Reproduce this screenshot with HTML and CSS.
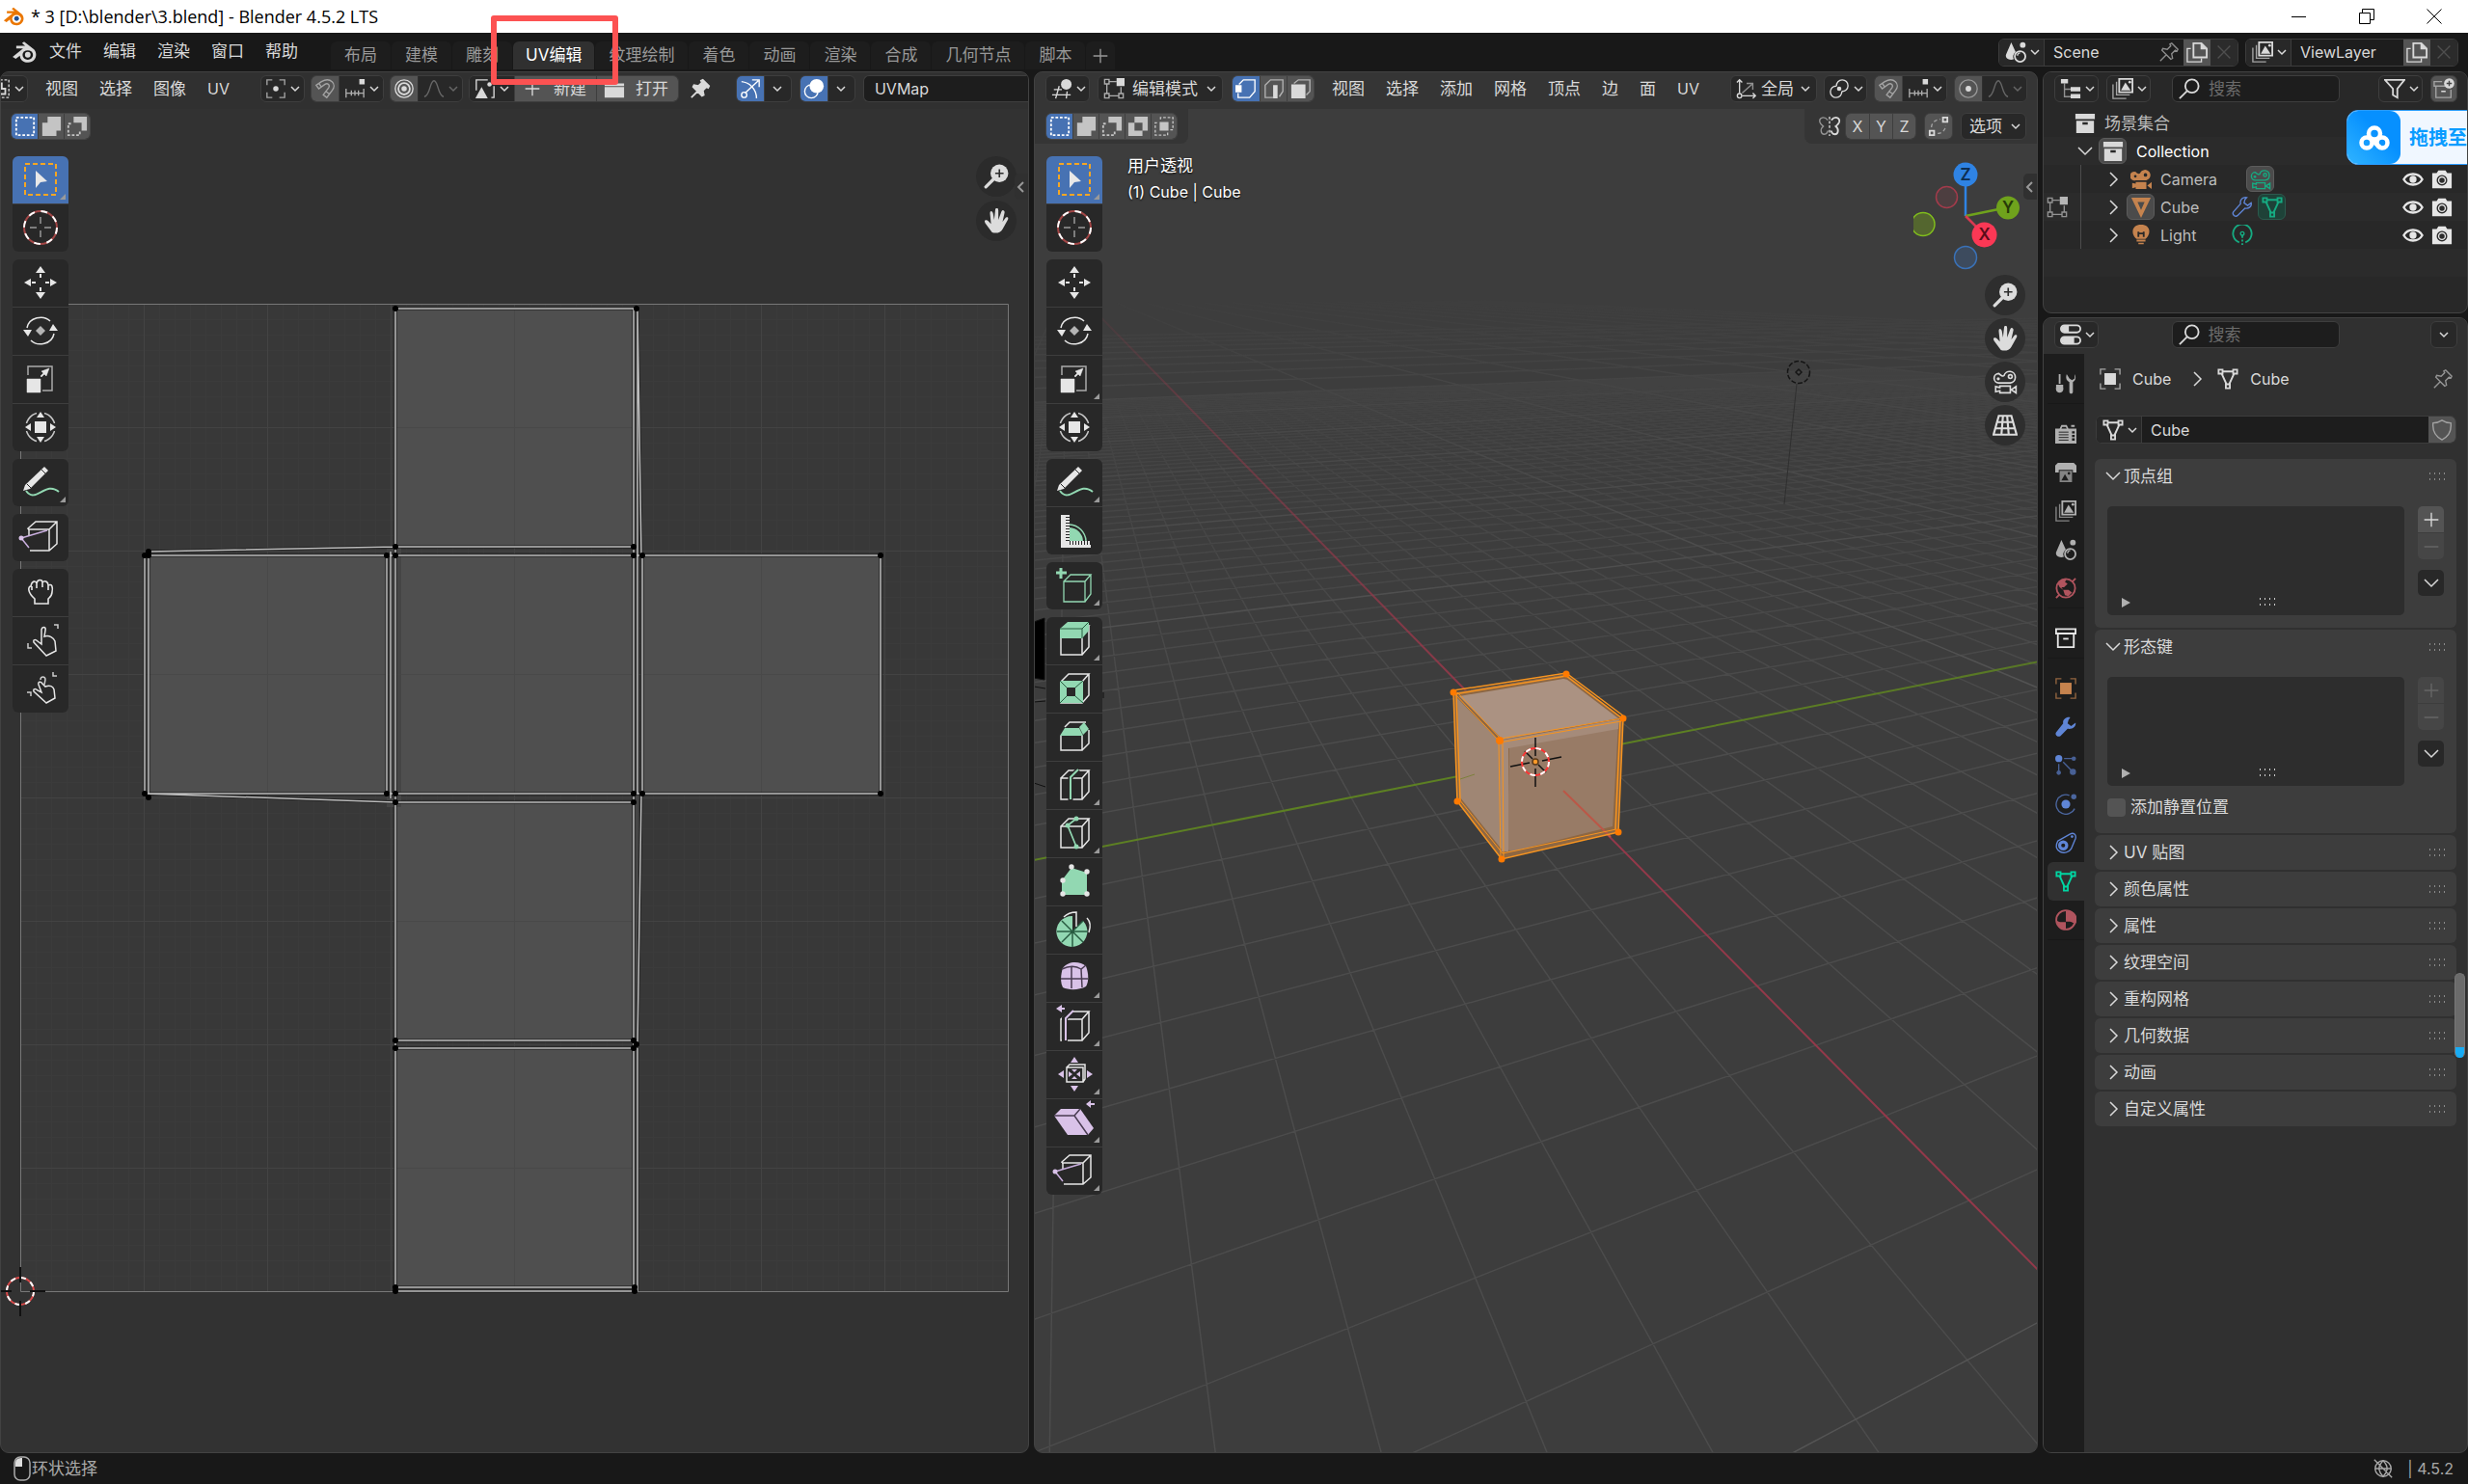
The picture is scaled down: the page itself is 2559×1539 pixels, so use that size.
FILE: index.html
```html
<!DOCTYPE html>
<html lang="zh-CN">
<head>
<meta charset="utf-8">
<title>* 3 [D:\blender\3.blend] - Blender 4.5.2 LTS</title>
<link rel="stylesheet" href="styles.css">
</head>
<body>
<svg class="sprite" aria-hidden="true">
<defs>
<symbol id="logo" viewBox="0 0 24 24"><path d="M1 16.500 11 8.500H4.500V6H13L10 3.500 12 2l9.500 7.500c4 4.500 1.500 12-5.500 12.500-5 .3-8-3-8-6.500L4 18.500Z" fill="currentColor"/><ellipse cx="15.500" cy="14.800" rx="5" ry="4.500" fill="var(--hole,#181818)"/><circle cx="15.500" cy="14.500" r="2.700" fill="var(--pupil,currentColor)"/></symbol>
<symbol id="chev-d" viewBox="0 0 12 12"><path d="M2 4l4 4 4-4" class="ln"/></symbol>
<symbol id="open" viewBox="0 0 18 18"><path d="M2 5l7 7 7-7" class="ln"/></symbol>
<symbol id="closed" viewBox="0 0 18 18"><path d="M6 2l7 7-7 7" class="ln"/></symbol>
<symbol id="back" viewBox="0 0 12 12"><path d="M8 1L3 6l5 5" class="ln2"/></symbol>
<symbol id="uvedit" viewBox="0 0 24 24"><path d="M2 2h20v20H2z" class="ln" stroke-dasharray="3 2"/><path d="M8 6h6v6h4v6H8z" class="ln2"/></symbol>
<symbol id="pivot" viewBox="0 0 24 24"><path d="M2 8V2h6M16 2h6v6M22 16v6h-6M8 22H2v-6" class="ln" opacity=".7"/><circle cx="12" cy="12" r="3" fill="currentColor"/></symbol>
<symbol id="magnet" viewBox="0 0 24 24"><path d="M2 8l6-4c10-6 18 3 12 10l-6 8-4-3 6-8c2-3-1-6-4-4L5 12zM5 6l3 4M17 18l-4-3" class="ln"/></symbol>
<symbol id="inc" viewBox="0 0 24 24"><path d="M2 12v10M22 12v10M2 17h20M8 14v6M12 14v6M16 14v6" class="ln" opacity=".75"/><path d="M17 1h6v6h-6z" fill="currentColor"/></symbol>
<symbol id="rings" viewBox="0 0 24 24"><circle cx="12" cy="12" r="10" class="ln"/><circle cx="12" cy="12" r="6.500" class="ln2"/><circle cx="12" cy="12" r="3" fill="currentColor"/></symbol>
<symbol id="prop" viewBox="0 0 24 24"><circle cx="12" cy="12" r="10" class="ln" opacity=".5"/><circle cx="12" cy="12" r="3.200" fill="currentColor"/></symbol>
<symbol id="bell" viewBox="0 0 24 24"><path d="M1 21c7-1 6-18 11-18s4 17 11 18" class="ln"/></symbol>
<symbol id="image" viewBox="0 0 24 24"><path d="M2 14V2h13M22 9v13h-3" class="ln"/><path d="M1 23l7-13 7 13z" fill="currentColor"/><circle cx="17" cy="7" r="2.500" fill="currentColor"/></symbol>
<symbol id="plus" viewBox="0 0 24 24"><path d="M12 4v16M4 12h16" class="ln"/></symbol>
<symbol id="minus" viewBox="0 0 24 24"><path d="M4 12h16" class="ln"/></symbol>
<symbol id="folder" viewBox="0 0 24 24"><path d="M1 3h10l3 3h9v3H1zM1 10h22v12H1z" fill="currentColor"/></symbol>
<symbol id="pin" viewBox="0 0 24 24"><path d="M15 2l7 7-1 2-2-1-4 4 1 5-2 1L4 10l1-2 5 1 4-4-1-2zM9 15l-7 7" fill="currentColor" stroke="currentColor" stroke-width="2"/></symbol>
<symbol id="pin-o" viewBox="0 0 24 24"><path d="M15 2l7 7-1 2-2-1-4 4 1 5-2 1L4 10l1-2 5 1 4-4-1-2zM9 15l-7 7" class="ln"/></symbol>
<symbol id="gizmo" viewBox="0 0 24 24"><path d="M6 17L21 3M14 2h8v8M2 4c9 1 17 8 17 19" class="ln"/><circle cx="5" cy="19" r="3" class="ln"/></symbol>
<symbol id="overlay" viewBox="0 0 24 24"><circle cx="15" cy="9" r="8" fill="currentColor"/><circle cx="9" cy="15" r="7.500" class="ln"/></symbol>
<symbol id="view3d" viewBox="0 0 24 24"><path d="M9 9L5 23M18 15l-1 8M3 13h9M1 19h21" class="ln"/><circle cx="17" cy="7" r="6" fill="currentColor"/></symbol>
<symbol id="editmode" viewBox="0 0 24 24"><path d="M7 4h8M4 7v10M7 20h10M20 17V10M1.500 1.500h5v5h-5zM1.500 17.500h5v5h-5zM17.500 17.500h5v5h-5z" class="ln" opacity=".75"/><path d="M15 0h9v9h-9z" fill="currentColor"/></symbol>
<symbol id="vert" viewBox="0 0 24 24"><path d="M4 7l5-5h13v13l-6 7H3v-5" class="ln"/><path d="M0 8h7v8H0z" fill="currentColor"/></symbol>
<symbol id="edge" viewBox="0 0 24 24"><path d="M11 22H2V8l6-6h14v13l-4 6" class="ln" opacity=".7"/><path d="M11 8h5v15h-5z" fill="currentColor"/></symbol>
<symbol id="face" viewBox="0 0 24 24"><path d="M4 6l5-4h13v13l-4 4" class="ln" opacity=".7"/><path d="M1 7h16v16H1z" fill="currentColor"/></symbol>
<symbol id="orient" viewBox="0 0 24 24"><path d="M4 17V2M1 5l3-3 3 3M7 20h15M19 17l3 3-3 3" class="ln"/><path d="M7 17L18 7M12 6h7v7" class="ln" opacity=".6"/><circle cx="4" cy="20" r="2.500" class="ln"/></symbol>
<symbol id="link" viewBox="0 0 24 24"><path d="M9 9a6.500 6.500 0 1 1 6 6M15 15a6.500 6.500 0 1 1-6-6" class="ln"/><circle cx="12" cy="12" r="2.500" fill="currentColor"/></symbol>
<symbol id="fly" viewBox="0 0 24 24"><path d="M10 5C6 0 0 2 1 7c1 3 3 4 4 5-4 3-3 9 1 9 3 0 4-3 4-4" class="ln" opacity=".6"/><path d="M14 5c4-5 10-3 9 2-1 3-3 4-4 5 4 3 3 9-1 9-3 0-4-3-4-4" class="ln2"/><path d="M12 1v22" class="ln" stroke-dasharray="3 2"/></symbol>
<symbol id="automerge" viewBox="0 0 24 24"><path d="M2 17h5v5H2zM17 2h5v5h-5z" class="ln2"/><path d="M4 13C4 8 9 4 14 4M11 20c5 0 9-4 9-9" class="ln" stroke-dasharray="4 3" opacity=".6"/></symbol>
<symbol id="scene" viewBox="0 0 24 24"><path d="M7 1l5 11c-4 3-3 7-2 8-5 2-10-1-9-5z" fill="currentColor"/><circle cx="20" cy="4" r="3.200" fill="currentColor"/><circle cx="17" cy="17" r="6" class="ln2"/><path d="M14 16c0-2 2-3 3-3" class="ln"/></symbol>
<symbol id="copy" viewBox="0 0 24 24"><path d="M5 8H1v15h16v-4" class="ln"/><path d="M8 2h9l6 6v10H8z" class="ln2"/><path d="M16 1v8h7z" fill="currentColor"/></symbol>
<symbol id="x" viewBox="0 0 24 24"><path d="M5 5l14 14M19 5L5 19" class="ln"/></symbol>
<symbol id="layers" viewBox="0 0 24 24"><path d="M8 1h15v15H8z" class="ln2"/><path d="M10 14l5-9 6 9z" fill="currentColor"/><circle cx="20" cy="4.500" r="1.500" fill="currentColor"/><path d="M5 4v15h15M1 7v16h15" class="ln" opacity=".7"/></symbol>
<symbol id="outliner" viewBox="0 0 24 24"><path d="M1 1h8v5H1zM12 10h11v5H12zM12 18h11v5H12z" fill="currentColor"/><path d="M5 6v15h7M5 12.500h7" class="ln" opacity=".6"/></symbol>
<symbol id="search" viewBox="0 0 24 24"><circle cx="15" cy="9" r="7.500" class="ln2"/><path d="M9.500 14.500L1 23" class="ln2"/></symbol>
<symbol id="filter" viewBox="0 0 24 24"><path d="M1 2h22l-8 10v10l-5-3v-7z" class="ln2"/></symbol>
<symbol id="newcoll" viewBox="0 0 24 24"><path d="M10 4H1v5h13M3 9v13h17V13" class="ln" opacity=".6"/><path d="M9 15h5" class="ln"/><circle cx="18" cy="6" r="5.800" fill="currentColor"/><path d="M18 3v6M15 6h6" stroke="#444" stroke-width="1.500"/></symbol>
<symbol id="coll" viewBox="0 0 24 24"><path d="M1 1h22v6H1zM2 9h20v14H2z" fill="currentColor"/><path d="M9 12h6" stroke="#282828" stroke-width="2.500"/></symbol>
<symbol id="coll-o" viewBox="0 0 24 24"><path d="M1 1.500h22v5H1zM3 7v15h18V7" class="ln2"/><path d="M9 12.500h6" class="ln2"/></symbol>
<symbol id="movie" viewBox="0 0 24 24"><path fill-rule="evenodd" d="M6 3.500a5 5 0 1 0 0 9.500h12a6 6 0 1 0-7-8c-1 1-3 1-5-1.500zM5.500 7a1.500 1.500 0 1 1 0 3 1.500 1.500 0 0 1 0-3zM17 5a2 2 0 1 1 0 4 2 2 0 0 1 0-4zM6 15h12v8H6v-2l-4 1v-6l4 1zM19 19l5-4v8z" fill="currentColor"/></symbol>
<symbol id="movie-o" viewBox="0 0 24 24"><path d="M6 4a4.500 4.500 0 1 0 0 9h11a5.500 5.500 0 1 0-6-7c-1 1-3 0-5-2zM7 16h10v6.500H7v-2l-4 1v-5l4 1zM18 19.500l4.500-3v6z" class="ln"/><circle cx="5.500" cy="9" r="1.500" fill="currentColor"/><circle cx="17" cy="7" r="1.800" class="ln"/></symbol>
<symbol id="tri" viewBox="0 0 24 24"><path fill-rule="evenodd" d="M1 1h22L12 24zM8 6l4 9 4-9z" fill="currentColor"/></symbol>
<symbol id="wrench-o" viewBox="0 0 24 24"><path d="M22 7l-4 3-4-3 1-4 2-2c-4-1-8 2-7 7L2 17c-2 3 2 7 5 4l8-8c4 1 8-2 7-6z" class="ln"/></symbol>
<symbol id="wrench" viewBox="0 0 24 24"><path d="M23 7l-5 4-4-3 1-4 2-3c-5-1-9 3-8 7L1 18c-2 3 2 6 5 4l8-8c6 1 10-3 9-7z" fill="currentColor"/></symbol>
<symbol id="mesh" viewBox="0 0 24 24"><path d="M1.500 1.500h4.500v4.500H1.500zM18 1.500h4.500v4.500H18zM9.750 18h4.500v4.500h-4.500zM6 3.500h12M5 6l5.500 12M19 6l-5.500 12" class="ln2"/></symbol>
<symbol id="bulb" viewBox="0 0 24 24"><path fill-rule="evenodd" d="M12 0c-12 0-11 12-5 16h10c6-4 7-16-5-16zM8 8v6h2v-3h4v3h2V8h-2v1h-4V8zM7 17h10v2H7zM9 20.500h6V22H9z" fill="currentColor"/></symbol>
<symbol id="lamp" viewBox="0 0 24 24"><path d="M8.500 20a10.500 10.500 0 1 1 7 0M12 12v3M12 17v2M12 21v2" class="ln2"/><circle cx="12" cy="10" r="2" class="ln"/></symbol>
<symbol id="eye" viewBox="0 0 24 24"><path d="M1.500 12C6 4 18 4 22.500 12 18 20 6 20 1.500 12z" fill="none" stroke="currentColor" stroke-width="2.500"/><circle cx="12" cy="12" r="4" fill="currentColor"/></symbol>
<symbol id="photo" viewBox="0 0 24 24"><path d="M1 5h5l2-3h8l2 3h5v17H1z" fill="currentColor"/><circle cx="12" cy="13" r="6" fill="#2b2b2b"/><circle cx="12" cy="13" r="4.500" fill="currentColor"/><circle cx="12" cy="13" r="3" fill="#2b2b2b"/></symbol>
<symbol id="props" viewBox="0 0 24 24"><rect x="1" y="1.500" width="22" height="8" rx="4" class="ln2"/><rect x="1" y="14.500" width="22" height="8" rx="4" class="ln2"/><path d="M5 2h5v7H5C0 8 0 3 5 2zM5 15h11v7H5c-5-1-5-6 0-7z" fill="currentColor"/></symbol>
<symbol id="objdata" viewBox="0 0 24 24"><path d="M1 7V1h6M17 1h6v6M23 17v6h-6M7 23H1v-6" class="ln" opacity=".7"/><path d="M5.500 5.500h13v13h-13z" fill="currentColor"/></symbol>
<symbol id="shield" viewBox="0 0 24 24"><path d="M12 1c3 2 6 3 10 3 1 9-2 15-10 19C4 19 1 13 2 4c4 0 7-1 10-3z" class="ln"/></symbol>
<symbol id="tools" viewBox="0 0 24 24"><path d="M4 1h2v11H4zM1 13h8v3c2 8-10 8-8 0zM13 1c-2 6 1 8 3 9v11c0 3 4 3 4 0V10c3-2 4-5 2-9v5l-3 2-3-2z" fill="currentColor"/></symbol>
<symbol id="render" viewBox="0 0 24 24"><path fill-rule="evenodd" d="M0 6h5l2-4h6l2 4h9v17H0zM8 4L7 6h6l-1-2zM18 2h4v2h-4z" fill="currentColor"/><path d="M4 10h11M4 13h11M4 16h11M4 19h11" stroke="#1d1d1d"/><path d="M19 9h3v2.500h-3zM19 13h3v2.500h-3zM19 17h3v2.500h-3z" fill="#1d1d1d"/></symbol>
<symbol id="output" viewBox="0 0 24 24"><path d="M3 1h18l3 3v8h-4V9H4v3H0V4z" fill="currentColor"/><path d="M5 10h14v13H5z" fill="currentColor" opacity=".7"/><path d="M7 21l4-7 4 7z" fill="#1d1d1d"/><circle cx="15.500" cy="13" r="1.500" fill="#1d1d1d"/></symbol>
<symbol id="world" viewBox="0 0 24 24"><circle cx="12" cy="12" r="10.500" class="ln2"/><path d="M3 7c3-5 8-5 10-5l-2 3 3 2-4 4H7l2 3-4-3zM9 14l6 0 4 3-4 4-4-1z" fill="currentColor"/><path d="M19 5l4-4M5 19l-4 4" class="ln2"/></symbol>
<symbol id="particles" viewBox="0 0 24 24"><circle cx="4" cy="4" r="4" fill="currentColor"/><g opacity=".65"><circle cx="21" cy="4" r="2.500" fill="currentColor"/><circle cx="4" cy="20" r="2.500" fill="currentColor"/><circle cx="20" cy="19" r="3.500" fill="currentColor"/><path d="M10 4h11M4 10v10M9 8l11 11" class="ln"/></g></symbol>
<symbol id="physics" viewBox="0 0 24 24"><circle cx="12" cy="12" r="5" fill="currentColor"/><g opacity=".7"><circle cx="21" cy="3.500" r="3" fill="currentColor"/><path d="M16 2a11 11 0 1 0 6 15" class="ln"/></g></symbol>
<symbol id="constraint" viewBox="0 0 24 24"><path d="M3 10L17 2c4-2 7 1 6 5l-5 12c-5 8-22 4-15-9z" class="ln"/><circle cx="9" cy="15" r="4" fill="none" stroke="currentColor" stroke-width="3.500"/><circle cx="19" cy="5" r="1.500" fill="currentColor"/></symbol>
<symbol id="material" viewBox="0 0 24 24"><circle cx="12" cy="12" r="10.800" class="ln2"/><path d="M12 1c15 0 14 14 10 16-2-3-6-3-10-3zM2 13c4 2 6 1.500 10 1.500V23C6 23 2 18 2 13z" fill="currentColor"/></symbol>
<symbol id="sel-new" viewBox="0 0 24 24"><path d="M2 2h20v20H2z" class="ln2" stroke-dasharray="3 2"/></symbol>
<symbol id="sel-ext" viewBox="0 0 24 24"><path d="M8 1h15v16h-5v6H2V8h6z" fill="currentColor"/></symbol>
<symbol id="sel-sub" viewBox="0 0 24 24"><path d="M8 1h15v16h-6V8H8z" fill="currentColor"/><path d="M5 9H2v13h13v-4" class="ln2" stroke-dasharray="3 2"/></symbol>
<symbol id="sel-diff" viewBox="0 0 24 24"><path fill-rule="evenodd" d="M8 1h15v16h-6v6H1V8h7zM8 8v9h9V8z" fill="currentColor"/></symbol>
<symbol id="sel-int" viewBox="0 0 24 24"><path d="M8 4V2h14v14h-3M4 8H2v14h14v-3" class="ln" stroke-dasharray="3 2"/><path d="M7 7h10v10H7z" fill="currentColor"/></symbol>
<symbol id="zoomin" viewBox="0 0 24 24"><circle cx="15" cy="9" r="8.500" fill="currentColor"/><path d="M15 5v8M11 9h8" stroke="#2c2c2c" stroke-width="1.500"/><path d="M9 15l-7 7" stroke="currentColor" stroke-width="3" stroke-linecap="round"/></symbol>
<symbol id="hand" viewBox="0 0 24 24"><path d="M8 23L2 15c-3-4 1-5 3-2l2 2L6 5c0-3 2-3 3 0l1 6 1-9c0-3 3-3 3 0v9l3-8c1-2 3-1 3 1l-2 9 3-4c2-1 3 0 2 2l-5 9c-2 4-7 4-10 3z" fill="currentColor"/></symbol>
<symbol id="persp" viewBox="0 0 24 24"><path d="M6 3h12l5 18H1zM4 9h16M2.500 15h19M10 3L8.500 21M14 3l1.500 18" fill="none" stroke="currentColor" stroke-width="2"/></symbol>

<symbol id="t-sub" viewBox="0 0 58 49"><path d="M55 39v6h-6z" fill="#9a9a9a"/></symbol>
<symbol id="t-select" viewBox="0 0 58 49"><rect x="13" y="8" width="32" height="32" fill="none" stroke="#f5a623" stroke-width="2" stroke-dasharray="5 3"/><path d="M24 15l12 11-7 1-5 6z" fill="#e8e8e8"/></symbol>
<symbol id="t-cursor" viewBox="0 0 58 49"><circle cx="29" cy="24" r="17" fill="none" stroke="#a24646" stroke-width="2"/><circle cx="29" cy="24" r="17" fill="none" stroke="#fff" stroke-width="2" stroke-dasharray="6.700 6.650"/><path d="M29 13v7M29 27v7M18 24h7M33 24h7" stroke="#999" stroke-width="1.500"/></symbol>
<symbol id="t-move" viewBox="0 0 58 49"><path d="M12 24l7-4v8zM46 24l-7-4v8zM29 7l-5 7h10zM29 41l-5-7h10zM20 23h4v2h-4zM34 23h4v2h-4zM28 15h2v4h-2zM28 29h2v4h-2z" fill="#e6e6e6"/></symbol>
<symbol id="t-rotate" viewBox="0 0 58 49"><path d="M15 21c2-11 17-14 24-7M43 27c-2 11-17 14-24 7" fill="none" stroke="#e6e6e6" stroke-width="1.500"/><path d="M11 23h9l-4 7zM47 24h-9l4-7z" fill="#e6e6e6"/><path d="M29 19l5 5-5 5-5-5z" fill="#b4b4b4"/></symbol>
<symbol id="t-scale" viewBox="0 0 58 49"><path d="M16 20V11h25v25H31" fill="none" stroke="#aaa" stroke-width="1.500"/><path d="M15 24h14v14H15zM38 13l-8 3 5 5zM29 21l1 1 4-4-1-1z" fill="#e6e6e6" stroke="#e6e6e6" stroke-width=".5"/></symbol>
<symbol id="t-transform" viewBox="0 0 58 49"><circle cx="29" cy="24" r="15" fill="none" stroke="#c8c8c8" stroke-width="1.500"/><path d="M11 20h8v8h-8zM39 20h8v8h-8zM25 7h8v8h-8zM25 33h8v8h-8z" fill="#282828"/><path d="M13 24l6-4v8zM45 24l-6-4v8zM29 8l-4 6h8zM29 40l-4-6h8zM23 18h12v12H23z" fill="#e6e6e6"/></symbol>
<symbol id="t-annotate" viewBox="0 0 58 49"><path d="M14 33C24 47 34 22 48 34" fill="none" stroke="#92d8b2" stroke-width="2"/><path d="M11 33l2-6L33 8l4 4-19 19z" fill="#e6e6e6"/><path d="M30 11l4 4M15 26l4 4" stroke="#282828"/></symbol>
<symbol id="t-measure" viewBox="0 0 58 49"><path d="M15 8h9v27h22v7H15z" fill="#e6e6e6"/><path d="M24 21a15 15 0 0 1 14 14H24z" fill="#92d8b2"/><path d="M24 18a18 18 0 0 1 17 17" fill="none" stroke="#92d8b2" stroke-width="1.500"/><path d="M22 10v25" stroke="#282828" stroke-width="4" stroke-dasharray="1 2"/><path d="M24 37h22" stroke="#282828" stroke-width="4" stroke-dasharray="1 2"/></symbol>
<symbol id="cube" viewBox="0 0 58 49"><path d="M15 17h22v22H15zM15 17l8-8h21l-7 8M44 9v22l-7 8" fill="none" stroke="currentColor" stroke-width="1.500"/></symbol>
<symbol id="t-add" viewBox="0 0 58 49"><path d="M18 20h22v21H18zM18 20l7-7h21l-6 7M46 13v20l-6 8" fill="none" stroke="#92d8b2" stroke-width="1.300"/><path d="M15 6v11M10 11h11" stroke="#92d8b2" stroke-width="3"/></symbol>
<symbol id="t-extrude" viewBox="0 0 58 49"><use href="#cube"/><path d="M14 12l8-7h22v9l-7 8H14z" fill="#92d8b2"/><path d="M14 12h23l7-7M37 12v10" fill="none" stroke="#285c41"/></symbol>
<symbol id="t-inset" viewBox="0 0 58 49"><use href="#cube"/><path fill-rule="evenodd" d="M14 16h24v23H14zM21 23v9h9v-9z" fill="#92d8b2"/><path d="M14 16l7 7M38 16l-8 7M14 39l7-7M38 39l-8-7" stroke="#285c41"/></symbol>
<symbol id="t-bevel" viewBox="0 0 58 49"><path d="M15 23v15h22V23M44 17v14l-7 7M19 14l5-5h17" fill="none" stroke="#e6e6e6" stroke-width="1.500"/><path d="M14 23l5-8h15l4 8zM34 14l5-5 5 7-6 6z" fill="#92d8b2"/></symbol>
<symbol id="t-loop" viewBox="0 0 58 49"><use href="#cube"/><path d="M25 40V16l8-8" fill="none" stroke="#282828" stroke-width="5"/><path d="M25 39V16l8-8" fill="none" stroke="#92d8b2" stroke-width="2"/></symbol>
<symbol id="t-knife" viewBox="0 0 58 49"><use href="#cube"/><path d="M31 9l-9 7 9 22" fill="none" stroke="#92d8b2" stroke-width="1.700"/><g fill="#92d8b2"><circle cx="31" cy="9" r="2.500"/><circle cx="22" cy="16" r="2.500"/><circle cx="31" cy="38" r="2.500"/></g></symbol>
<symbol id="t-poly" viewBox="0 0 58 49"><path d="M16 23l10-13 16 5v23H16z" fill="#92d8b2"/><g fill="#e6e6e6"><circle cx="26" cy="9" r="2.700"/><circle cx="42" cy="14" r="2.700"/><circle cx="17" cy="23" r="2.700"/><circle cx="17" cy="37" r="2.700"/><circle cx="42" cy="37" r="2.700"/></g></symbol>
<symbol id="t-spin" viewBox="0 0 58 49"><path d="M27 26V10a16 16 0 1 0 11 5z" fill="#92d8b2"/><path d="M27 26v16M11 26h32M16 15l22 22M38 15L16 37" stroke="#285c41" stroke-width="1.500"/><path d="M18 11c4-4 9-5 13-5v15M42 12c4 4 4 9 2 15" fill="none" stroke="#e6e6e6" stroke-width="1.500"/></symbol>
<symbol id="t-smooth" viewBox="0 0 58 49"><path d="M17 14c6-8 18-7 24-2 3 8 3 16 0 21-7 4-18 4-24 1-3-6-2-14 0-20z" fill="#d9c2e8"/><path d="M15 25h28M26 13v22M16 15c8-4 14-4 20 0l5-4M36 15l1 19" fill="none" stroke="#4a3d52" stroke-width="1.500"/></symbol>
<symbol id="t-slide" viewBox="0 0 58 49"><use href="#cube"/><path d="M19 40V16l7-8" fill="none" stroke="#282828" stroke-width="6"/><path d="M20 39V16l8-8" fill="none" stroke="#d9c2e8" stroke-width="2"/><path d="M10 6l6-4v3h3v2h-3v3z" fill="#d9c2e8"/></symbol>
<symbol id="t-shrink" viewBox="0 0 58 49"><path d="M21 17h17v15H21zM21 17l3-3h16v15l-2 3" fill="none" stroke="#e6e6e6" stroke-width="1.500"/><path d="M29 6l4 6h-8zM29 42l4-6h-8zM12 24l6-4v8zM48 24l-6-4v8zM29 22l3-3h-6zM29 26l3 3h-6zM27 24l-4-3v6zM31 24l4-3v6z" fill="#d9c2e8"/></symbol>
<symbol id="t-shear" viewBox="0 0 58 49"><path d="M8 17l7-7h20l14 20-6 7H22z" fill="#d9c2e8"/><path d="M8 17h21l14 20M29 17l6-7" fill="none" stroke="#4a3d52" stroke-width="1.500"/><path d="M41 5l5-4v3h4v2h-4v3z" fill="#d9c2e8"/></symbol>
<symbol id="t-rip" viewBox="0 0 58 49"><path d="M16 16V15l8-7h22v23l-8 7H18M16 16h22v22M38 16l8-8M17 16v6" fill="none" stroke="#e6e6e6" stroke-width="1.500"/><path d="M9 25L36 17M9 25l8 10" fill="none" stroke="#c9aede" stroke-width="1.500"/><circle cx="9" cy="25" r="2.500" fill="#d9c2e8"/></symbol>
<symbol id="t-grab" viewBox="0 0 58 49"><path d="M23 36v-5c-8-7-7-13-4-13 1-6 5-6 6-3 1-5 6-4 6-1 3-3 6 0 6 3 4-2 5 2 4 7 0 4-3 6-4 7v5zM20 18v4M25 15v5M31 14v5M37 17v5" fill="none" stroke="#e6e6e6" stroke-width="1.600"/></symbol>
<symbol id="t-relax" viewBox="0 0 58 49"><path d="M33 40L20 26c-1-3 2-3 4-1l4 3V13c1-4 5-3 4 1l-1 6c5-2 10 2 11 5l1 10z" transform="translate(2 0)" fill="none" stroke="#e6e6e6" stroke-width="1.500"/><path d="M31 8h5v4M14 26v5h4" transform="translate(12 0) translate(-2 0)" fill="none" stroke="#ccc" stroke-width="0"/><path d="M43 8h4v4M16 27v5h4" fill="none" stroke="#ccc" stroke-width="1.500"/></symbol>
<symbol id="t-pinch" viewBox="0 0 58 49"><path d="M35 39L22 27c-1-3 2-3 4-1l4 2-3-8c-1-3 2-4 4-1l3 3c5-2 8 0 9 3l1 9z" fill="none" stroke="#e6e6e6" stroke-width="1.500"/><path d="M29 15c0-4 5-4 5 0l-1 5M42 7v4h4M15 28h4v4" fill="none" stroke="#ccc" stroke-width="1.500"/></symbol>

<pattern id="uv-minor" x="21" y="315" width="16" height="16" patternUnits="userSpaceOnUse"><path d="M.5 0v16M0 .5h16" stroke="#3b3b3b"/></pattern>
<pattern id="uv-major" x="21" y="315" width="128" height="128" patternUnits="userSpaceOnUse"><path d="M.5 0v128M0 .5h128" stroke="#464646"/></pattern>
<linearGradient id="fade" gradientUnits="userSpaceOnUse" x1="0" y1="295" x2="0" y2="760"><stop offset="0" stop-color="#000"/><stop offset=".25" stop-color="#666"/><stop offset="1" stop-color="#fff"/></linearGradient>
<mask id="fog" maskUnits="userSpaceOnUse" x="1000" y="60" width="1200" height="1500"><path d="M1000 60h1200v1500H1000z" fill="url(#fade)"/></mask>
</defs>
</svg>

<div class="titlebar">
  <svg class="ico orange"><use href="#logo"/></svg>
  <h1>* 3 [D:\blender\3.blend] - Blender 4.5.2 LTS</h1>
  <div class="winbtns">
    <button aria-label="最小化"><svg viewBox="0 0 16 16"><path d="M0 8.500h15" stroke="#000" fill="none"/></svg></button>
    <button aria-label="还原"><svg viewBox="0 0 16 16"><path d="M.5 4.500h11v11H.5zM3.500 4V.5h12v11H12" stroke="#000" fill="none"/></svg></button>
    <button aria-label="关闭"><svg viewBox="0 0 16 16"><path d="M.5.5l15 15M15.500.5l-15 15" stroke="#000" fill="none"/></svg></button>
  </div>
</div>

<header class="topbar">
  <svg class="ico logo"><use href="#logo"/></svg>
  <nav class="menus"><button>文件</button><button>编辑</button><button>渲染</button><button>窗口</button><button>帮助</button></nav>
  <nav class="tabs"><button>布局</button><button>建模</button><button>雕刻</button><button class="on">UV编辑</button><button>纹理绘制</button><button>着色</button><button>动画</button><button>渲染</button><button>合成</button><button>几何节点</button><button>脚本</button><button aria-label="添加工作区"><svg class="ico"><use href="#plus"/></svg></button></nav>
  <div class="idgroup scene">
    <button class="dd" aria-label="场景"><svg class="ico"><use href="#scene"/></svg><svg class="cv"><use href="#chev-d"/></svg></button>
    <input class="field en" aria-label="场景名称" value="Scene"><svg class="ico dim inpin"><use href="#pin-o"/></svg>
    <button class="sq lit" aria-label="新建场景"><svg class="ico"><use href="#copy"/></svg></button>
    <button class="sq off" aria-label="删除场景" disabled><svg class="ico"><use href="#x"/></svg></button>
  </div>
  <div class="idgroup layer">
    <button class="dd" aria-label="视图层"><svg class="ico"><use href="#layers"/></svg><svg class="cv"><use href="#chev-d"/></svg></button>
    <input class="field en" aria-label="视图层名称" value="ViewLayer">
    <button class="sq lit" aria-label="新建视图层"><svg class="ico"><use href="#copy"/></svg></button>
    <button class="sq off" aria-label="删除视图层" disabled><svg class="ico"><use href="#x"/></svg></button>
  </div>
</header>

<main class="workspace">
<section class="editor uv">
  <svg class="canvas" viewBox="1 75 1065 1431" preserveAspectRatio="xMidYMid slice">
    <path d="M21 315h1024v1024H21z" fill="#383838"/>
    <path d="M21 315h1024v1024H21z" fill="url(#uv-minor)"/>
    <path d="M410 320h250v247H410zM151 576h250v247H151zM410 576h247v247H410zM666 576h247v247H666zM410 832h247v247H410zM410 1087h247v250H410z" fill="#4f4f4f"/>
    <path d="M401 567h15v270h-15zM655 320h7v1018h-7z" fill="#454545"/>
    <path d="M21 315h1024v1024H21z" fill="url(#uv-major)" opacity=".7"/>
    <path d="M21.500 315.500h1024v1024h-1024z" fill="none" stroke="#777"/>
    <g id="uvmesh"></g>
    <circle cx="21" cy="1339" r="14" fill="none" stroke="#d84a4a" stroke-width="2"/>
    <circle cx="21" cy="1339" r="14" fill="none" stroke="#fff" stroke-width="2" stroke-dasharray="5.500 5.500"/>
    <path d="M21 1314v16M21 1349v16M1 1339h11M31 1339h16" stroke="#111" stroke-width="2"/>
  </svg>
  <div class="bar">
    <button class="dd box cut" aria-label="编辑器类型"><svg class="ico"><use href="#uvedit"/></svg><svg class="cv"><use href="#chev-d"/></svg></button>
    <nav class="menus"><button>视图</button><button>选择</button><button>图像</button><button class="en">UV</button></nav>
    <div class="uvtools">
      <button class="dd box" aria-label="轴心点"><svg class="ico"><use href="#pivot"/></svg><svg class="cv"><use href="#chev-d"/></svg></button>
      <div class="join"><button class="sq lit" aria-label="吸附"><svg class="ico dim"><use href="#magnet"/></svg></button><button class="dd" aria-label="吸附至"><svg class="ico"><use href="#inc"/></svg><svg class="cv"><use href="#chev-d"/></svg></button></div>
      <div class="join"><button class="sq lit" aria-label="衰减编辑"><svg class="ico"><use href="#rings"/></svg></button><button class="dd faint" aria-label="衰减"><svg class="ico"><use href="#bell"/></svg><svg class="cv"><use href="#chev-d"/></svg></button></div>
      <div class="join"><button class="dd" aria-label="图像"><svg class="ico"><use href="#image"/></svg><svg class="cv"><use href="#chev-d"/></svg></button><button class="lit wide"><svg class="ico"><use href="#plus"/></svg>新建</button><button class="lit wide"><svg class="ico"><use href="#folder"/></svg>打开</button></div>
    </div>
    <button class="sq pinbtn" aria-label="固定"><svg class="ico"><use href="#pin"/></svg></button>
    <div class="uvshow">
      <div class="join"><button class="sq blue" aria-label="Gizmo"><svg class="ico"><use href="#gizmo"/></svg></button><button class="sq" aria-label="Gizmo 选项"><svg class="cv"><use href="#chev-d"/></svg></button></div>
      <div class="join"><button class="sq blue" aria-label="叠加层"><svg class="ico"><use href="#overlay"/></svg></button><button class="sq" aria-label="叠加层选项"><svg class="cv"><use href="#chev-d"/></svg></button></div>
      <input class="field en uvmap" aria-label="UV 贴图" value="UVMap">
    </div>
  </div>
  <div class="bar2">
    <div class="join soft"><button class="sq blue" aria-label="新建选择"><svg class="ico"><use href="#sel-new"/></svg></button><button class="sq lit pick3" aria-label="扩展选择"><svg class="ico"><use href="#sel-ext"/></svg></button><button class="sq lit pick3" aria-label="减去选择"><svg class="ico"><use href="#sel-sub"/></svg></button></div>
  </div>
  <div class="stage">
    <div class="toolbar">
      <div><button class="on" aria-label="框选"><svg><use href="#t-select"/><use href="#t-sub"/></svg></button><button aria-label="游标"><svg><use href="#t-cursor"/></svg></button></div>
      <div><button aria-label="移动"><svg><use href="#t-move"/></svg></button><button aria-label="旋转"><svg><use href="#t-rotate"/></svg></button><button aria-label="缩放"><svg><use href="#t-scale"/></svg></button><button aria-label="变换"><svg><use href="#t-transform"/></svg></button></div>
      <div><button aria-label="标注"><svg><use href="#t-annotate"/><use href="#t-sub"/></svg></button></div>
      <div><button aria-label="断离区域"><svg><use href="#t-rip"/></svg></button></div>
      <div><button aria-label="抓起"><svg><use href="#t-grab"/></svg></button><button aria-label="松弛"><svg><use href="#t-relax"/></svg></button><button aria-label="夹捏"><svg><use href="#t-pinch"/></svg></button></div>
    </div>
    <div class="navcol flat"><button aria-label="缩放视图"><svg class="ico"><use href="#zoomin"/></svg></button><button aria-label="移动视图"><svg class="ico"><use href="#hand"/></svg></button></div>
  </div>
  <button class="sidetab" aria-label="侧栏"><svg class="cv"><use href="#back"/></svg></button>
</section>

<section class="editor view">
  <svg class="canvas" viewBox="1073 75 1039 1431" preserveAspectRatio="xMidYMid slice">
    <g id="grid" mask="url(#fog)"></g>
    <g mask="url(#fog)" fill="none" stroke-width="2"><path d="M1117 304L1592 790 2120 1324" stroke="#93394a"/><path d="M1072 892L2120 685" stroke="#5d8023"/></g>
    <path d="M1072 645l11-4v64l-11-2zM1072 712l12 2M1072 728l12-1M1072 812l12 4M1144 718v6" fill="#000" stroke="#111"/>
    <g fill="none" stroke="#151515" stroke-width="1.500"><circle cx="1865" cy="386" r="11.500" stroke-dasharray="5 2"/><path d="M1865 383l3 3-3 3-3-3z"/></g><path d="M1863 398l-13 125" stroke="#303030"/>
    <g>
      <path d="M1507 718L1624 699 1683 745 1678 863 1557 891 1511 831z" fill="#8d6743"/>
      <path d="M1513 722l108-18q4 0 7 3l50 38-120 22z" fill="#ab9282"/>
      <path d="M1511 724l44 45 3 113-44-55z" fill="#9f8674"/>
      <path d="M1565 772l113-22-6 107-104 26q-5 0-5-6z" fill="#987b66"/>
      <path d="M1555 768l124-22-1 10-114 20v107h-7z" fill="#a58b7a"/>
      <path d="M1621 820l49 48" stroke="#bb5747" stroke-width="2"/>
      <path d="M1511 809l18-6" stroke="#7d803c"/>
      <g fill="none" stroke="#f79420"><path stroke-width="1.500" d="M1507 720L1624 701 1682 745M1507 716L1624 698 1684 743M1507 718l4 113M1510 720l4 110M1511 831l46 60 121-28M1678 863l5-118M1675 860l5-113"/><path d="M1513 829l45 56 118-25M1507 718l47 50M1511 718l45 48M1555 770l126-22M1556 766l126-21M1554 770l2 120M1558 770l1 120"/></g>
      <g fill="#ff7a00"><circle cx="1507" cy="718" r="3.500"/><circle cx="1624" cy="699" r="3.500"/><circle cx="1683" cy="745" r="3.500"/><circle cx="1555" cy="768" r="4"/><circle cx="1511" cy="831" r="3.500"/><circle cx="1557" cy="891" r="3.500"/><circle cx="1678" cy="863" r="3.500"/></g>
    </g>
    <g fill="none" stroke-width="1.500"><path d="M1592 765v19M1592 797v19M1566 795l20-4M1599 789l20-4M1581 779l8 8M1595 793l8 8" stroke="#111"/><circle cx="1592" cy="790" r="14" stroke="#ff3333" stroke-width="2"/><circle cx="1592" cy="790" r="14" stroke="#fff" stroke-width="2" stroke-dasharray="5.500 5.500"/><circle cx="1592" cy="790" r="3" fill="#ff9a2a" stroke="#5b3a1a"/></g>
  </svg>
  <div class="bar">
    <button class="dd box" aria-label="编辑器类型"><svg class="ico"><use href="#view3d"/></svg><svg class="cv"><use href="#chev-d"/></svg></button>
    <label class="pick mode"><svg class="ico"><use href="#editmode"/></svg><select aria-label="模式"><option>编辑模式</option></select><svg class="cv"><use href="#chev-d"/></svg></label>
    <div class="join soft"><button class="sq blue" aria-label="顶点选择"><svg class="ico"><use href="#vert"/></svg></button><button class="sq lit" aria-label="边选择"><svg class="ico"><use href="#edge"/></svg></button><button class="sq lit" aria-label="面选择"><svg class="ico"><use href="#face"/></svg></button></div>
    <nav class="menus"><button>视图</button><button>选择</button><button>添加</button><button>网格</button><button>顶点</button><button>边</button><button>面</button><button class="en">UV</button></nav>
    <div class="right">
      <label class="pick axis"><svg class="ico"><use href="#orient"/></svg><select aria-label="变换坐标系"><option>全局</option></select><svg class="cv"><use href="#chev-d"/></svg></label>
      <button class="dd box" aria-label="轴心点"><svg class="ico"><use href="#link"/></svg><svg class="cv"><use href="#chev-d"/></svg></button>
      <div class="join"><button class="sq lit" aria-label="吸附"><svg class="ico dim"><use href="#magnet"/></svg></button><button class="dd" aria-label="吸附至"><svg class="ico"><use href="#inc"/></svg><svg class="cv"><use href="#chev-d"/></svg></button></div>
      <div class="join"><button class="sq lit" aria-label="衰减编辑"><svg class="ico"><use href="#prop"/></svg></button><button class="dd faint" aria-label="衰减"><svg class="ico"><use href="#bell"/></svg><svg class="cv"><use href="#chev-d"/></svg></button></div>
    </div>
  </div>
  <div class="bar2 split">
    <div class="tray left"><div class="join soft"><button class="sq blue" aria-label="新建选择"><svg class="ico"><use href="#sel-new"/></svg></button><button class="sq lit pick3" aria-label="扩展选择"><svg class="ico"><use href="#sel-ext"/></svg></button><button class="sq lit pick3" aria-label="减去选择"><svg class="ico"><use href="#sel-sub"/></svg></button><button class="sq lit pick3" aria-label="差值选择"><svg class="ico"><use href="#sel-diff"/></svg></button><button class="sq lit pick3" aria-label="相交选择"><svg class="ico"><use href="#sel-int"/></svg></button></div></div>
    <div class="tray rightside">
      <svg class="ico"><use href="#fly"/></svg>
      <div class="join xyz en"><button>X</button><button>Y</button><button>Z</button></div>
      <div class="join"><button class="sq lit" aria-label="自动合并"><svg class="ico"><use href="#automerge"/></svg></button></div>
      <button class="box opts">选项<svg class="cv"><use href="#chev-d"/></svg></button>
    </div>
  </div>
  <div class="stage">
    <div class="toolbar">
      <div><button class="on" aria-label="框选"><svg><use href="#t-select"/><use href="#t-sub"/></svg></button><button aria-label="游标"><svg><use href="#t-cursor"/></svg></button></div>
      <div><button aria-label="移动"><svg><use href="#t-move"/></svg></button><button aria-label="旋转"><svg><use href="#t-rotate"/></svg></button><button aria-label="缩放"><svg><use href="#t-scale"/><use href="#t-sub"/></svg></button><button aria-label="变换"><svg><use href="#t-transform"/></svg></button></div>
      <div><button aria-label="标注"><svg><use href="#t-annotate"/><use href="#t-sub"/></svg></button><button aria-label="测量"><svg><use href="#t-measure"/></svg></button></div>
      <div><button aria-label="添加立方体"><svg><use href="#t-add"/><use href="#t-sub"/></svg></button></div>
      <div>
        <button aria-label="挤出"><svg><use href="#t-extrude"/><use href="#t-sub"/></svg></button><button aria-label="内插面"><svg><use href="#t-inset"/></svg></button><button aria-label="倒角"><svg><use href="#t-bevel"/></svg></button><button aria-label="环切"><svg><use href="#t-loop"/><use href="#t-sub"/></svg></button><button aria-label="切割"><svg><use href="#t-knife"/><use href="#t-sub"/></svg></button><button aria-label="多边形建形"><svg><use href="#t-poly"/></svg></button><button aria-label="旋绕"><svg><use href="#t-spin"/></svg></button><button aria-label="光滑"><svg><use href="#t-smooth"/><use href="#t-sub"/></svg></button><button aria-label="滑移边线"><svg><use href="#t-slide"/><use href="#t-sub"/></svg></button><button aria-label="收缩"><svg><use href="#t-shrink"/><use href="#t-sub"/></svg></button><button aria-label="切变"><svg><use href="#t-shear"/><use href="#t-sub"/></svg></button><button aria-label="断离区域"><svg><use href="#t-rip"/><use href="#t-sub"/></svg></button>
      </div>
    </div>
    <div class="info"><p>用户透视</p><p class="en">(1) Cube | Cube</p></div>
    <div class="navcol">
      <svg class="axes" viewBox="1983 159 116 126">
        <g stroke-width="2.500"><path d="M2037 224v-40" stroke="#2f83e3"/><path d="M2037 224l44-9" stroke="#6fa21c"/><path d="M2037 224l20 20" stroke="#d83a52"/></g>
        <circle cx="2017.500" cy="204.500" r="11" fill="#4d3e40" stroke="#a23b4b" stroke-width="1.500"/><circle cx="1993" cy="232.500" r="12" fill="#54662f" stroke="#80bd1c" stroke-width="1.500"/><circle cx="2037" cy="267" r="11.500" fill="#3d4b5e" stroke="#3a72b8" stroke-width="1.500"/>
        <circle cx="2037" cy="181" r="12.500" fill="#2f83e3"/><circle cx="2081" cy="215.500" r="12" fill="#6fa21c"/><circle cx="2056.500" cy="243.500" r="13" fill="#fb3855"/>
        <g class="axlab" text-anchor="middle"><text x="2037" y="187" fill="#0d2d50">Z</text><text x="2081" y="221" fill="#263a08">Y</text><text x="2056.500" y="249" fill="#5a0c18">X</text></g>
      </svg>
      <button aria-label="缩放视图"><svg class="ico"><use href="#zoomin"/></svg></button><button aria-label="移动视图"><svg class="ico"><use href="#hand"/></svg></button><button aria-label="摄像机视图"><svg class="ico"><use href="#movie-o"/></svg></button><button aria-label="透视/正交"><svg class="ico"><use href="#persp"/></svg></button>
    </div>
  </div>
  <button class="sidetab" aria-label="侧栏"><svg class="cv"><use href="#back"/></svg></button>
</section>

<div class="side">
<section class="editor outliner">
  <div class="bar">
    <button class="dd box" aria-label="编辑器类型"><svg class="ico"><use href="#outliner"/></svg><svg class="cv"><use href="#chev-d"/></svg></button>
    <button class="dd box" aria-label="显示模式"><svg class="ico"><use href="#layers"/></svg><svg class="cv"><use href="#chev-d"/></svg></button>
    <label class="search"><svg class="ico"><use href="#search"/></svg><input placeholder="搜索" aria-label="搜索大纲"></label>
    <button class="dd box" aria-label="过滤"><svg class="ico"><use href="#filter"/></svg><svg class="cv"><use href="#chev-d"/></svg></button>
    <button class="sq box lit" aria-label="新建集合"><svg class="ico"><use href="#newcoll"/></svg></button>
  </div>
  <ul class="tree">
    <li class="root"><svg class="ico"><use href="#coll"/></svg><span>场景集合</span></li>
    <li class="l1"><svg class="tw"><use href="#open"/></svg><i class="halo"><svg class="ico"><use href="#coll"/></svg></i><span class="en white">Collection</span></li>
    <li class="l2"><b></b><svg class="tw"><use href="#closed"/></svg><i class="c-obj"><svg class="ico"><use href="#movie"/></svg></i><span class="en w1">Camera</span><i class="halo c-data"><svg class="ico"><use href="#movie-o"/></svg></i><em><svg class="ico"><use href="#eye"/></svg><svg class="ico"><use href="#photo"/></svg></em></li>
    <li class="l2"><b><svg class="ico"><use href="#editmode"/></svg></b><svg class="tw"><use href="#closed"/></svg><i class="halo c-obj"><svg class="ico"><use href="#tri"/></svg></i><span class="en w2">Cube</span><i class="c-mod"><svg class="ico"><use href="#wrench-o"/></svg></i><i class="halo deep c-data"><svg class="ico"><use href="#mesh"/></svg></i><em><svg class="ico"><use href="#eye"/></svg><svg class="ico"><use href="#photo"/></svg></em></li>
    <li class="l2"><b></b><svg class="tw"><use href="#closed"/></svg><i class="c-obj"><svg class="ico"><use href="#bulb"/></svg></i><span class="en w2">Light</span><i class="c-data"><svg class="ico"><use href="#lamp"/></svg></i><em><svg class="ico"><use href="#eye"/></svg><svg class="ico"><use href="#photo"/></svg></em></li>
    <li></li><li></li>
  </ul>
  <div class="dropzone"><span class="cloud"><svg viewBox="0 0 32 26"><g fill="none" stroke="#fff" stroke-width="4.500"><circle cx="16" cy="8.500" r="6"/><circle cx="8" cy="18" r="5.500"/><circle cx="24" cy="18" r="5.500"/><path d="M12 14l10 9"/></g></svg></span><span>拖拽至</span></div>
</section>

<section class="editor props">
  <div class="bar">
    <button class="dd box" aria-label="编辑器类型"><svg class="ico"><use href="#props"/></svg><svg class="cv"><use href="#chev-d"/></svg></button>
    <label class="search"><svg class="ico"><use href="#search"/></svg><input placeholder="搜索" aria-label="搜索属性"></label>
    <button class="sq box" aria-label="选项"><svg class="cv"><use href="#chev-d"/></svg></button>
  </div>
  <div class="pbody">
    <nav class="ptabs">
      <div><button aria-label="工具"><svg class="ico"><use href="#tools"/></svg></button></div>
      <div><button aria-label="渲染"><svg class="ico"><use href="#render"/></svg></button><button aria-label="输出"><svg class="ico"><use href="#output"/></svg></button><button aria-label="视图层"><svg class="ico"><use href="#layers"/></svg></button><button aria-label="场景"><svg class="ico"><use href="#scene"/></svg></button><button class="c-red" aria-label="世界"><svg class="ico"><use href="#world"/></svg></button></div>
      <div><button class="c-white" aria-label="集合"><svg class="ico"><use href="#coll-o"/></svg></button></div>
      <div><button class="c-obj" aria-label="物体"><svg class="ico"><use href="#objdata"/></svg></button><button class="c-mod" aria-label="修改器"><svg class="ico"><use href="#wrench"/></svg></button><button class="c-mod" aria-label="粒子"><svg class="ico"><use href="#particles"/></svg></button><button class="c-mod" aria-label="物理"><svg class="ico"><use href="#physics"/></svg></button><button class="c-mod" aria-label="约束"><svg class="ico"><use href="#constraint"/></svg></button><button class="c-green on" aria-label="数据"><svg class="ico"><use href="#mesh"/></svg></button><button class="c-red" aria-label="材质"><svg class="ico"><use href="#material"/></svg></button></div>
    </nav>
    <div class="pmain">
      <div class="crumb en"><svg class="ico"><use href="#objdata"/></svg><span>Cube</span><svg class="tw"><use href="#closed"/></svg><svg class="ico"><use href="#mesh"/></svg><span>Cube</span><svg class="ico dim last"><use href="#pin-o"/></svg></div>
      <div class="idgroup data"><button class="dd" aria-label="网格数据"><svg class="ico"><use href="#mesh"/></svg><svg class="cv"><use href="#chev-d"/></svg></button><input class="field en" aria-label="数据名称" value="Cube"><button class="sq lit" aria-label="伪用户"><svg class="ico dim"><use href="#shield"/></svg></button></div>
      <div class="panel">
        <button class="ph"><svg class="tw"><use href="#open"/></svg>顶点组<i class="grip"></i></button>
        <div class="pl"><div class="list"><i class="play"></i><i class="grip hi"></i></div><div class="lb"><div><button aria-label="添加"><svg class="ico"><use href="#plus"/></svg></button><button class="off" disabled aria-label="移除"><svg class="ico"><use href="#minus"/></svg></button></div><button class="more" aria-label="更多"><svg class="tw"><use href="#open"/></svg></button></div></div>
      </div>
      <div class="panel">
        <button class="ph"><svg class="tw"><use href="#open"/></svg>形态键<i class="grip"></i></button>
        <div class="pl"><div class="list"><i class="play"></i><i class="grip hi"></i></div><div class="lb"><div><button class="off" disabled aria-label="添加"><svg class="ico"><use href="#plus"/></svg></button><button class="off" disabled aria-label="移除"><svg class="ico"><use href="#minus"/></svg></button></div><button class="more" aria-label="更多"><svg class="tw"><use href="#open"/></svg></button></div></div>
        <label class="check"><input type="checkbox">添加静置位置</label>
      </div>
      <div class="panel"><button class="ph"><svg class="tw"><use href="#closed"/></svg>UV 贴图<i class="grip"></i></button></div>
      <div class="panel"><button class="ph"><svg class="tw"><use href="#closed"/></svg>颜色属性<i class="grip"></i></button></div>
      <div class="panel"><button class="ph"><svg class="tw"><use href="#closed"/></svg>属性<i class="grip"></i></button></div>
      <div class="panel"><button class="ph"><svg class="tw"><use href="#closed"/></svg>纹理空间<i class="grip"></i></button></div>
      <div class="panel"><button class="ph"><svg class="tw"><use href="#closed"/></svg>重构网格<i class="grip"></i></button></div>
      <div class="panel"><button class="ph"><svg class="tw"><use href="#closed"/></svg>几何数据<i class="grip"></i></button></div>
      <div class="panel"><button class="ph"><svg class="tw"><use href="#closed"/></svg>动画<i class="grip"></i></button></div>
      <div class="panel"><button class="ph"><svg class="tw"><use href="#closed"/></svg>自定义属性<i class="grip"></i></button></div>
    </div>
  </div>
  <div class="level"></div>
</section>
</div>
</main>

<footer class="status">
  <svg class="mouse" viewBox="0 0 18 26"><rect x="1" y="1" width="16" height="24" rx="6" fill="none" stroke="#aaa" stroke-width="1.500"/><path d="M2 11V7c0-4 3-5 7-5v9z" fill="#ddd"/></svg><span>环状选择</span>
  <span class="ver en"><svg class="ico" viewBox="0 0 24 24"><circle cx="12" cy="12" r="9" class="ln"/><path d="M3 12h18M12 3c-6 6-6 12 0 18 6-6 6-12 0-18M2 2l20 20" class="ln"/></svg><span>| 4.5.2</span></span>
</footer>
<div class="mark"></div>
<script src="scene.js"></script>
</body>
</html>
```
FILE: styles.css
```css
* { box-sizing: border-box; }
html, body { height: 100%; }
body {
  margin: 0; background: #181818; color: #d9d9d9; overflow: hidden;
  display: flex; flex-direction: column; position: relative;
  font: 17px/20px Inter, "Noto Sans CJK SC", sans-serif;
}
button, input, select { font: inherit; color: inherit; background: none; border: 0; padding: 0; margin: 0; }
button { display: flex; align-items: center; justify-content: center; }
input, select { min-width: 0; outline: 0; appearance: none; }
h1, p, ul { margin: 0; padding: 0; font-weight: 400; }
i, em, b { font-style: normal; font-weight: 400; }
svg { display: block; flex: none; }
.en, button.en, input.en { font-size: 16px; }
.sprite { position: absolute; width: 0; height: 0; }
.ln { fill: none; stroke: currentColor; stroke-width: 1.5; }
.ln2 { fill: none; stroke: currentColor; stroke-width: 2; }
.ico { width: 22px; height: 22px; }
.cv { width: 12px; height: 12px; }
.tw { width: 18px; height: 18px; }
.dim { opacity: .6; }

/* window frame */
.titlebar { flex: none; height: 34px; background: #fff; color: #000; display: flex; align-items: center; padding-left: 3px; }
.titlebar h1 { font: 18px/24px "Open Sans", sans-serif; margin-left: 7px; }
.orange { color: #ea7600; --hole: #fff; --pupil: #1f4f94; }
.winbtns { margin-left: auto; display: flex; }
.winbtns button { width: 70px; height: 34px; }
.winbtns svg { width: 16px; height: 16px; }

.topbar { flex: none; height: 40px; display: flex; align-items: center; padding: 0 10px 0 12px; }
.topbar > .logo { width: 26px; height: 26px; margin-right: 2px; }
.menus { display: flex; }
.menus button { height: 28px; padding: 0 11px; }
.topbar .menus { padding-bottom: 2px; }
.tabs { display: flex; gap: 1px; margin-left: 23px; align-self: flex-end; padding-bottom: 2px; }
.tabs button { height: 29px; padding: 0 14px 1px; color: #989898; background: #1d1d1d; border-radius: 6px 6px 0 0; }
.tabs button:last-child { padding: 0 4px; }
.tabs .on { background: #303030; color: #fff; padding: 0 13px 1px; }
.idgroup { display: flex; height: 29px; border: 1px solid #3c3c3c; border-radius: 6px; overflow: hidden; background: #1d1d1d; align-items: stretch; }
.idgroup .field { flex: 1; padding-left: 9px; border-left: 1px solid #3c3c3c; background: #1d1d1d; }
.scene { width: 249px; margin-left: auto; }
.layer { width: 221px; margin-left: 7px; }
.inpin { align-self: center; margin-right: 4px; }
.dd { width: 46px; gap: 3px; height: 100%; background: #282828; flex: none; padding-left: 2px; }
.sq { width: 28px; height: 100%; flex: none; }
.lit { background: #545454; }
.blue { background: #4772b3; color: #fff; }
.off { background: #2b2b2b; color: #4e4e4e; }
.faint { opacity: .35; }
.pick3 { color: #c4c4c4; }

/* editors */
.workspace { flex: 1; min-height: 0; display: grid; grid-template-columns: 1067fr 1041fr 441fr; gap: 5px; }
.editor { position: relative; min-width: 0; border: 1px solid #424242; border-radius: 9px; overflow: hidden; display: flex; flex-direction: column; }
.uv { background: #323232; }
.view { background: #3d3d3d; }
.canvas { position: absolute; inset: 0; width: 100%; height: 100%; }
.bar { position: relative; flex: none; height: 38px; padding: 3px 10px 0 11px; display: flex; align-items: flex-start; background: #353535; }
.bar > *, .bar2 .join, .bar2 .box, .join { height: 28px; }
.box, .join, .pick, .search { border: 1px solid #3e3e3e; border-radius: 6px; overflow: hidden; background: #282828; }
.join { display: flex; flex: none; }
.join > * + * { border-left: 1px solid #3e3e3e; }
.soft { border-color: #454545; }
.box.lit { background: #545454; }
.uv .bar { background: #303030; padding: 3px 0 0; }
.uv .cut { margin: 0 7px 0 -18px; }
.uvtools { display: flex; gap: 6px; margin-left: 21px; }
.wide { width: 85px; justify-content: flex-start; padding-left: 7px; gap: 11px; white-space: nowrap; }
.pinbtn { margin: 0 23px 0 8px; }
.uvshow { flex: 1; min-width: 0; display: flex; gap: 8px; }
.uvmap { flex: 1; background: #1d1d1d; border: 1px solid #3e3e3e; border-right: 0; border-radius: 6px 0 0 6px; padding-left: 11px; height: 28px; }
.bar2 { position: relative; flex: none; height: 36px; padding: 4px 10px; display: flex; }
.bar2 .soft .sq { width: 27px; }
.split { padding: 0; justify-content: space-between; }
.tray { background: #353535; padding: 4px 11px; height: 36px; display: flex; align-items: center; }
.left { border-radius: 0 0 8px 0; }
.rightside { border-radius: 0 0 0 8px; padding-left: 14px; gap: 8px; }
.rightside > .ico { width: 24px; margin-right: -4px; }
.xyz button { width: 24px; background: #545454; height: 100%; }
.opts { width: 68px; gap: 8px; padding-left: 4px; white-space: nowrap; }
.view .bar > .soft { margin: 0 7px 0 9px; }
.pick { display: flex; align-items: center; padding: 0 5px; gap: 8px; height: 28px; }
.pick select { flex: 1; }
.mode { width: 130px; margin-left: 8px; }
.axis { width: 90px; gap: 4px; }
.right { display: flex; gap: 7px; margin-left: auto; }
.right .dd.box { width: 45px; height: 28px; }

.stage { position: relative; flex: 1; min-height: 0; display: flex; padding: 10px 12px 0; }
.toolbar { width: 58px; flex: none; display: flex; flex-direction: column; gap: 8px; margin-top: 3px; }
.toolbar div { display: flex; flex-direction: column; gap: 1px; border-radius: 6px; overflow: hidden; background: #3e3e3e; }
.toolbar button { height: 49px; background: #282828; color: #e6e6e6; }
.toolbar button.on { background: #4772b3; }
.toolbar svg { width: 58px; height: 49px; }
.info { margin-left: 26px; color: #fff; line-height: 27px; text-shadow: 0 1px 2px #000; }
.navcol { margin-left: auto; display: flex; flex-direction: column; align-items: flex-end; gap: 3px; }
.navcol button { width: 42px; height: 42px; border-radius: 50%; background: #2e2e2e; color: #dcdcdc; }
.navcol .ico { width: 26px; height: 26px; }
.axes { width: 116px; height: 126px; margin-bottom: -3px; }
.axlab { font-size: 17px; font-weight: 600; }
.flat { padding-top: 3px; gap: 4px; }
.flat button { background: #2b2b2b; }
.sidetab { position: absolute; right: 0; top: 105px; width: 14px; height: 27px; background: #303030; border-radius: 5px 0 0 5px; color: #999; }

/* right column */
.side { min-width: 0; display: flex; flex-direction: column; gap: 4px; }
.outliner { height: 251px; flex: none; background: #282828; overflow: hidden; }
.outliner .bar { background: #282828; gap: 8px; }
.outliner .search { margin: 0 auto 0 14px; }
.search { width: 174px; display: flex; align-items: center; background: #1d1d1d; padding-left: 6px; gap: 9px; }
.search input { flex: 1; }
.search input::placeholder { color: #6b6b6b; opacity: 1; }
.tree { list-style: none; }
.tree li { height: 29px; display: flex; align-items: center; }
.tree li:nth-child(even) { background: #2b2b2b; }
.tree i { width: 29px; height: 27px; display: flex; align-items: center; justify-content: center; border-radius: 6px; }
.tree .halo { background: #4b4b4b; border: 1px solid #5c5c5c; }
.tree .deep { background: #1e4238; border-color: #2b5a4d; }
.tree span { color: #bdbdbd; }
.tree .white { color: #fff; margin-left: 5px; }
.root { padding-left: 32px; gap: 9px; }
.l1 { padding-left: 34px; gap: 5px; }
.l2 b { width: 39px; padding-left: 3px; border-right: 1px solid #555; margin-right: 24px; height: 29px; display: flex; align-items: center; opacity: .8; }
.l2 > i { margin-left: 2px; }
.l2 .tw { margin: 0 3px 0 0; }
.l2 span { margin-left: 6px; }
.w1 { width: 87px; }
.w2 { width: 68px; }
.l2 em { margin-left: auto; display: flex; gap: 8px; padding-right: 15px; color: #e6e6e6; }
.c-obj { color: #c5834e; }
.c-data { color: #16ab82; }
.c-mod { color: #5f85d6; }
.c-red { color: #b0545e; }
.c-white { color: #e6e6e6; }
.c-green { color: #00d6a3; }
.dropzone { position: absolute; left: 314px; right: -8px; top: 39px; height: 57px; display: flex; align-items: center; gap: 9px; background: #f0f7ff; border: 1px solid #2a9bff; border-radius: 12px 0 0 12px; color: #0a9cff; font-size: 20px; font-weight: 700; white-space: nowrap; overflow: hidden; }
.cloud { width: 55px; height: 55px; flex: none; border-radius: 11px; background: linear-gradient(45deg, #30b4ff, #0690ff 60%); display: flex; align-items: center; justify-content: center; }
.cloud svg { width: 32px; height: 26px; }

.props { flex: 1; min-height: 0; background: #303030; }
.props .bar { background: #303030; height: 37px; justify-content: space-between; }
.props .search { margin-right: 19px; }
.pbody { flex: 1; min-height: 0; display: flex; }
.ptabs { width: 42px; flex: none; background: #1d1d1d; padding: 11px 0 0 4px; display: flex; flex-direction: column; gap: 12px; color: #b0b0b0; }
.ptabs div { border-bottom: 1px solid #181818; }
.ptabs button { width: 100%; height: 40px; border-radius: 6px 0 0 6px; }
.ptabs div:not(:last-child) { margin-bottom: -1px; }
.ptabs .on { background: #303030; }
.pmain { flex: 1; min-width: 0; padding: 7px 11px 0 11px; display: flex; flex-direction: column; gap: 2px; }
.crumb { display: flex; align-items: center; height: 38px; padding: 0 3px 0 5px; }
.crumb span { margin: 0 18px 0 12px; }
.crumb .tw { margin-right: 12px; }
.crumb .last { margin-left: auto; margin-right: 0; }
.data { margin: 17px 0 14px 1px; flex: none; }
.panel { background: #3d3d3d; border-radius: 6px; flex: none; }
.ph { width: 100%; height: 36px; padding: 0 10px 0 10px; justify-content: flex-start; }
.ph .tw { margin-right: 2px; }
.grip { width: 20px; height: 12px; margin-left: auto; background: radial-gradient(circle, #8a8a8a 1px, transparent 1px) 0 0 / 5px 6px; }
.hi { background-image: radial-gradient(circle, #ccc 1px, transparent 1px); }
.pl { display: flex; gap: 14px; padding: 13px 13px 13px; }
.list { flex: 1; height: 113px; background: #2d2d2d; border-radius: 5px; display: flex; align-items: flex-end; padding: 0 0 8px 15px; }
.play { border: 5px solid transparent; border-left: 9px solid #b0b0b0; border-right: 0; }
.list .grip { margin-right: auto; }
.lb { width: 27px; display: flex; flex-direction: column; gap: 11px; }
.lb > div { border-radius: 5px; overflow: hidden; display: flex; flex-direction: column; gap: 1px; }
.lb button { width: 27px; height: 27px; background: #545454; }
.lb .off { background: #464646; color: #666; }
.lb .more { background: #282828; border-radius: 5px; }
.check { display: flex; align-items: center; gap: 5px; padding: 0 13px 18px; height: 36px; }
.check input { width: 19px; height: 19px; background: #545454; border-radius: 4px; }
.level { position: absolute; right: 2px; top: 679px; width: 11px; height: 88px; border-radius: 6px; background: linear-gradient(#6b6b6b 88%, #18acf5 88%); border: 1px solid #777; border-bottom-color: #18acf5; }

.status { flex: none; height: 32px; display: flex; align-items: center; padding: 0 15px 0 14px; color: #a8a8a8; gap: 1px; }
.mouse { width: 18px; height: 26px; }
.ver { margin-left: auto; display: flex; gap: 14px; align-items: center; }
.mark { position: absolute; left: 509px; top: 16px; width: 132px; height: 72px; border: 6px solid #fc5252; border-radius: 3px; }
```
FILE: scene.js
```js
const NS = 'http://www.w3.org/2000/svg';
function add(parent, name, attrs) {
  const el = document.createElementNS(NS, name);
  for (const k in attrs) el.setAttribute(k, attrs[k]);
  parent.appendChild(el);
}

// Floor grid, projected through the viewport camera.
const cam = { f: 995, d: 15.4, cx: 1592, cy: 790, sin: 0.447, cos: 0.894, fx: -0.916, fy: 0.4 };
function view(x, y) {
  const h = x * cam.fx + y * cam.fy;
  return [x * cam.fy - y * cam.fx, h * cam.sin, cam.d + h * cam.cos];
}
function floorLine(x1, y1, x2, y2) {
  let a = view(x1, y1), b = view(x2, y2);
  const near = 1;
  if (a[2] < near && b[2] < near) return '';
  const clip = (p, q) => { const t = (near - p[2]) / (q[2] - p[2]); return p.map((v, i) => v + (q[i] - v) * t); };
  if (a[2] < near) a = clip(a, b);
  if (b[2] < near) b = clip(b, a);
  const s = p => (cam.cx + cam.f * p[0] / p[2]).toFixed(1) + ' ' + (cam.cy - cam.f * p[1] / p[2]).toFixed(1);
  return 'M' + s(a) + 'L' + s(b);
}
let minor = '', major = '';
for (let i = -150; i <= 150; i++) {
  if (i === 0) continue;
  const far = i % 10 === 0 ? 400 : 60;
  if (i % 10 && Math.abs(i) > 60) continue;
  const d = floorLine(i, -far, i, far) + floorLine(-far, i, far, i);
  if (i % 10 === 0) major += d; else minor += d;
}
const grid = document.getElementById('grid');
add(grid, 'path', { d: minor, fill: 'none', stroke: '#4c4c4c', 'stroke-width': 1.5 });
add(grid, 'path', { d: major, fill: 'none', stroke: '#555', 'stroke-width': 1.5 });

// Unwrapped cube: edges as [x1, y1, x2, y2], in canvas units.
const edges = [
  [410, 320, 660, 320], [410, 320, 410, 1339], [657, 320, 657, 1339], [661, 320, 661, 576], [661, 320, 665, 576],
  [410, 567, 657, 567], [154, 572, 410, 567], [150, 576, 913, 576], [150, 576, 150, 823], [154, 576, 154, 823],
  [401, 576, 401, 823], [405, 572, 405, 828], [666, 576, 666, 823], [661, 576, 661, 823], [913, 576, 913, 823],
  [150, 823, 913, 823], [150, 823, 410, 832], [410, 832, 657, 832], [660, 823, 665, 823], [665, 823, 661, 1084],
  [410, 1079, 660, 1079], [410, 1087, 660, 1087], [661, 1087, 661, 1339], [410, 1335, 661, 1335], [410, 1339, 661, 1339],
];
const mesh = document.getElementById('uvmesh');
const d = edges.map(e => `M${e[0]} ${e[1]}L${e[2]} ${e[3]}`).join('');
add(mesh, 'path', { d, fill: 'none', stroke: '#1c1c1c', 'stroke-width': 3 });
add(mesh, 'path', { d, fill: 'none', stroke: '#bdbdbd', 'stroke-width': 1.5 });
const dots = [
  [410, 320], [660, 320], [410, 567], [657, 567], [150, 576], [154, 572], [154, 576], [401, 576], [410, 576], [657, 576],
  [666, 576], [913, 576], [150, 823], [154, 827], [401, 823], [410, 823], [410, 832], [657, 823], [657, 832], [666, 823],
  [913, 823], [410, 1079], [410, 1087], [657, 1079], [657, 1087], [660, 1083], [410, 1335], [410, 1339], [658, 1335], [658, 1339],
];
for (const [cx, cy] of dots) add(mesh, 'circle', { cx, cy, r: 3, fill: '#000' });
```
